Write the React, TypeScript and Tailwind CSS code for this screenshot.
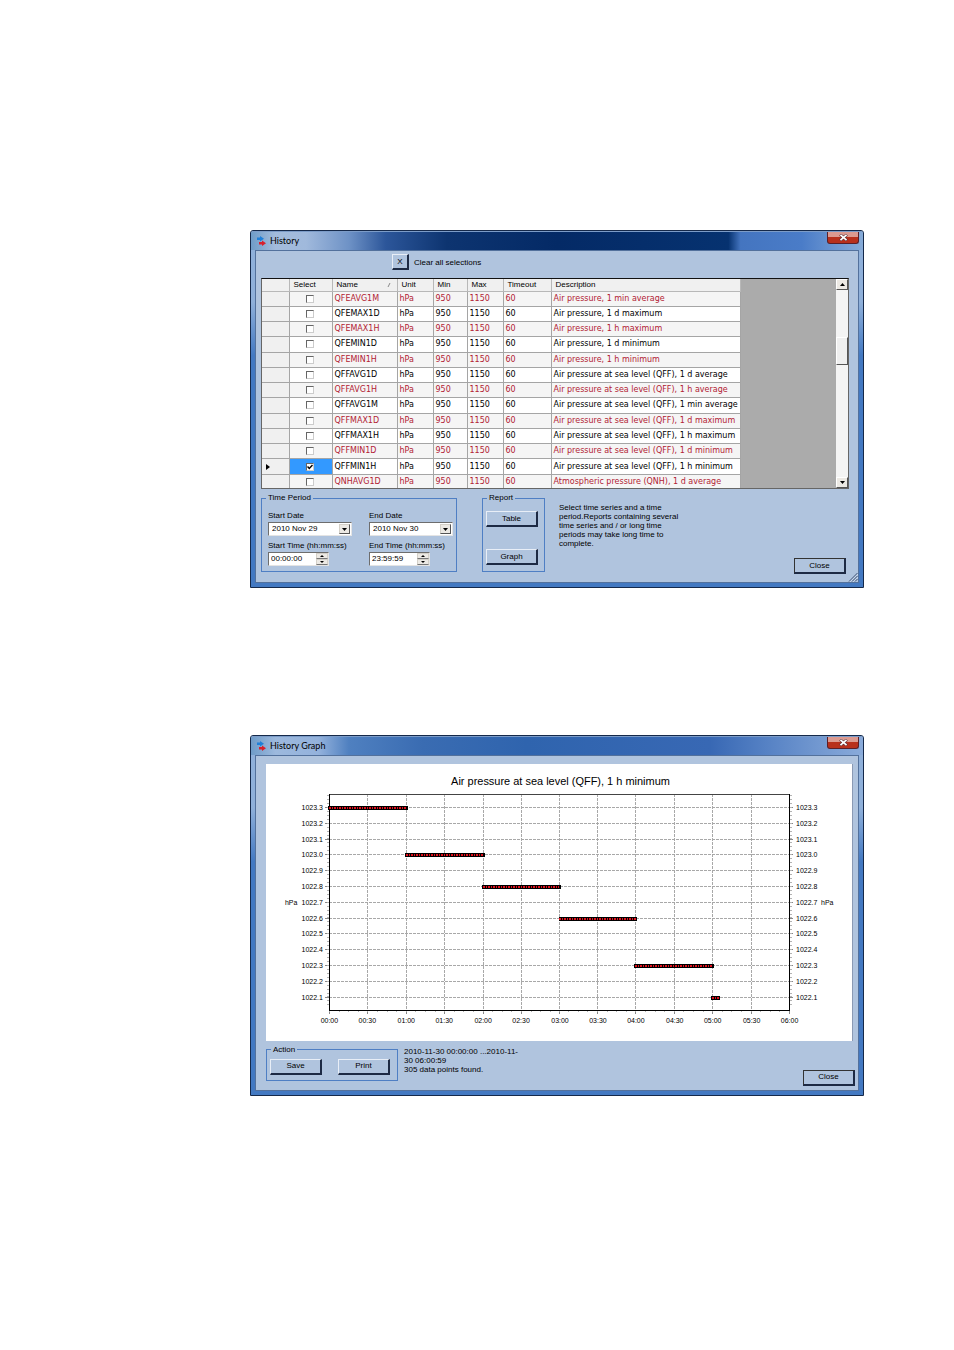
import { useState } from 'react';
import type { ReactNode } from 'react';

const rows = [
    { name: 'QFEAVG1M', desc: 'Air pressure, 1 min average', red: true },
    { name: 'QFEMAX1D', desc: 'Air pressure, 1 d maximum', red: false },
    { name: 'QFEMAX1H', desc: 'Air pressure, 1 h maximum', red: true },
    { name: 'QFEMIN1D', desc: 'Air pressure, 1 d minimum', red: false },
    { name: 'QFEMIN1H', desc: 'Air pressure, 1 h minimum', red: true },
    { name: 'QFFAVG1D', desc: 'Air pressure at sea level (QFF), 1 d average', red: false },
    { name: 'QFFAVG1H', desc: 'Air pressure at sea level (QFF), 1 h average', red: true },
    { name: 'QFFAVG1M', desc: 'Air pressure at sea level (QFF), 1 min average', red: false },
    { name: 'QFFMAX1D', desc: 'Air pressure at sea level (QFF), 1 d maximum', red: true },
    { name: 'QFFMAX1H', desc: 'Air pressure at sea level (QFF), 1 h maximum', red: false },
    { name: 'QFFMIN1D', desc: 'Air pressure at sea level (QFF), 1 d minimum', red: true },
    { name: 'QFFMIN1H', desc: 'Air pressure at sea level (QFF), 1 h minimum', red: false },
    { name: 'QNHAVG1D', desc: 'Atmospheric pressure (QNH), 1 d average', red: true },
];

const yLabels = ['1023.3', '1023.2', '1023.1', '1023.0', '1022.9', '1022.8', '1022.7', '1022.6', '1022.5', '1022.4', '1022.3', '1022.2', '1022.1'];
const xLabels = ['00:00', '00:30', '01:00', '01:30', '02:00', '02:30', '03:00', '03:30', '04:00', '04:30', '05:00', '05:30', '06:00'];

// start and end in half hours, row is the index in yLabels
const series = [
    { from: 0, to: 2, row: 0 },
    { from: 2, to: 4, row: 3 },
    { from: 4, to: 6, row: 5 },
    { from: 6, to: 8, row: 7 },
    { from: 8, to: 10, row: 10 },
    { from: 10, to: 10.15, row: 12 },
];

function AppIcon() {
    return (
        <svg className="h-[10px] w-[9px]" viewBox="0 0 9 10" aria-hidden="true">
            <path d="M0 1.5h3V0l4 2.700-4 2.700V4H0z" fill="#1f7fd8" />
            <path d="M2 6h3V4.500l4 2.700-4 2.700V8.500H2z" fill="#d8202c" />
        </svg>
    );
}

function Window({ title, titleBar, children }: { title: string; titleBar: string; children: ReactNode }) {
    return (
        <section className="flex flex-col rounded-t-[3px] border border-[#15294a] bg-linear-to-b from-[#8fb0da] from-20% to-[#4379c2] to-35% px-1 pb-1">
            <header className={`-mx-1 flex h-[19px] items-start justify-between rounded-t-[2px] border-t border-[#7c9cc8] pl-[6px] pr-1 ${titleBar}`}>
                <div className="flex h-[18px] items-center gap-1">
                    <AppIcon />
                    <h1 className="font-[Lato,sans-serif] text-[9px] leading-3">{title}</h1>
                </div>
                <button
                    aria-label="Close window"
                    className="flex h-3 w-8 items-center justify-center rounded-b-[3px] border border-t-0 border-[#5b1f28] bg-linear-to-b from-[#dc9a90] from-45% to-[#b8301c] to-50%"
                >
                    <svg className="h-[7px] w-[9px]" viewBox="0 0 8 6" aria-hidden="true">
                        <path d="M1 0.500 7 5.500M7 0.500 1 5.500" stroke="#5b3038" strokeWidth="2.600" />
                        <path d="M1.300 0.700 6.700 5.300M6.700 0.700 1.300 5.300" stroke="#fff" strokeWidth="1.600" />
                    </svg>
                </button>
            </header>
            <div className="relative border border-[#53719c] bg-[#b0c4de]">{children}</div>
        </section>
    );
}

function PushButton({ children, className = 'border-t-[#e8eef7] border-l-[#e8eef7]' }: { children: ReactNode; className?: string }) {
    return (
        <button className={`h-4 w-[52px] border border-r-2 border-b-2 border-r-[#1d2a44] border-b-[#1d2a44] text-center leading-3 ${className}`}>
            {children}
        </button>
    );
}

function Group({ title, className = '', children }: { title: string; className?: string; children: ReactNode }) {
    return (
        <fieldset className={`border border-[#4f7fc4] ${className}`}>
            <legend className="ml-1 px-[2px] leading-[10px]">{title}</legend>
            {children}
        </fieldset>
    );
}

function DateField({ id, label, value }: { id: string; label: string; value: string }) {
    return (
        <div className="flex w-[84px] flex-col">
            <label htmlFor={id} className="leading-3">{label}</label>
            <div className="relative flex">
                <select id={id} className="h-[14px] w-full appearance-none border border-t-[#6d6d6d] border-l-[#6d6d6d] border-[#e4e4e4] bg-white pl-[3px] leading-3">
                    <option>{value}</option>
                </select>
                <span className="pointer-events-none absolute top-[2px] right-[2px] flex h-[10px] w-[11px] items-center justify-center border border-[#d4d0c8] border-r-[#555] border-b-[#555] bg-[#ece9e4]">
                    <svg className="h-[3px] w-[5px]" viewBox="0 0 5 3" aria-hidden="true"><path d="M0 0h5L2.500 3z" /></svg>
                </span>
            </div>
        </div>
    );
}

function TimeField({ id, label, value }: { id: string; label: string; value: string }) {
    return (
        <div className="flex w-[84px] flex-col">
            <label htmlFor={id} className="leading-3 whitespace-nowrap">{label}</label>
            <div className="flex h-[14px] w-[61px] border border-t-[#6d6d6d] border-l-[#6d6d6d] border-[#e4e4e4] bg-white">
                <input id={id} defaultValue={value} className="w-full min-w-0 pl-[2px] leading-3" />
                <div className="flex w-3 shrink-0 flex-col">
                    <button aria-label={`Increase ${label}`} className="flex h-[6px] items-center justify-center border border-[#d4d0c8] border-b-[#777] bg-[#ece9e4]">
                        <svg className="h-[2px] w-[4px]" viewBox="0 0 4 2" aria-hidden="true"><path d="M0 2h4L2 0z" /></svg>
                    </button>
                    <button aria-label={`Decrease ${label}`} className="flex h-[6px] items-center justify-center border border-[#d4d0c8] border-b-[#777] bg-[#ece9e4]">
                        <svg className="h-[2px] w-[4px]" viewBox="0 0 4 2" aria-hidden="true"><path d="M0 0h4L2 2z" /></svg>
                    </button>
                </div>
            </div>
        </div>
    );
}

function SeriesTable() {
    const [selected, setSelected] = useState(['QFFMIN1H']);

    const toggle = (name: string) =>
        setSelected(selected.includes(name) ? selected.filter((n) => n !== name) : [...selected, name]);

    return (
        <div className="flex h-[211px] overflow-hidden border border-t-[#111] border-[#666] bg-[#ababab]">
            <table className="h-[211px] w-[479px] table-fixed border-collapse">
                <colgroup>
                    <col className="w-[27px]" />
                    <col className="w-[43px]" />
                    <col className="w-[65px]" />
                    <col className="w-[36px]" />
                    <col className="w-[34px]" />
                    <col className="w-[36px]" />
                    <col className="w-[48px]" />
                    <col />
                </colgroup>
                <thead>
                    <tr className="h-3 bg-[#f0f0f0] text-left leading-[10px] *:border-r *:border-b *:border-[#b8b8b8] *:p-0 *:pt-px *:pl-1 *:font-normal">
                        <th />
                        <th>Select</th>
                        <th>
                            <div className="flex items-center justify-between pr-[6px]">
                                Name
                                <svg className="h-[4px] w-[4px]" viewBox="0 0 4 4" aria-hidden="true"><path d="M1 4 3 0" stroke="#888" /></svg>
                            </div>
                        </th>
                        <th>Unit</th>
                        <th>Min</th>
                        <th>Max</th>
                        <th>Timeout</th>
                        <th>Description</th>
                    </tr>
                </thead>
                <tbody className="font-['DejaVu_Sans',Verdana,sans-serif] text-[8px] leading-[10px]">
                    {rows.map((row) => {
                        const checked = selected.includes(row.name);
                        return (
                            <tr
                                key={row.name}
                                className={`*:border-r *:border-b *:border-[#a5a5a5] *:p-0 *:pl-[2px] *:whitespace-nowrap ${row.red ? 'bg-[#f5f5f5] text-[#b22234]' : 'bg-white text-black'}`}
                            >
                                <td className="bg-[#f0f0f0]">
                                    {checked && <svg className="ml-[2px] h-[6px] w-[4px]" viewBox="0 0 4 6" aria-hidden="true"><path d="M0 0v6l4-3z" fill="#000" /></svg>}
                                </td>
                                <td className={checked ? 'bg-[#3399ff]' : ''}>
                                    <label className="relative ml-[14px] flex h-2 w-2">
                                        <input
                                            type="checkbox"
                                            aria-label={`Select ${row.name}`}
                                            checked={checked}
                                            onChange={() => toggle(row.name)}
                                            className="h-2 w-2 appearance-none border border-t-[#666] border-l-[#666] border-[#ccc] bg-white"
                                        />
                                        {checked && <svg className="absolute inset-[1px] h-[6px] w-[6px]" viewBox="0 0 6 6" aria-hidden="true"><path d="M0.500 2.500 2.300 4.500 5.500 1" fill="none" stroke="#000" strokeWidth="1.500" /></svg>}
                                    </label>
                                </td>
                                <td>{row.name}</td>
                                <td>hPa</td>
                                <td>950</td>
                                <td>1150</td>
                                <td>60</td>
                                <td>{row.desc}</td>
                            </tr>
                        );
                    })}
                </tbody>
            </table>
            <div className="ml-auto flex h-[209px] w-3 flex-col bg-[#f4f4f4]">
                <button aria-label="Scroll up" className="flex h-[11px] items-center justify-center border border-white border-r-[#555] border-b-[#555] bg-[#ece9e4]">
                    <svg className="h-[3px] w-[5px]" viewBox="0 0 5 3" aria-hidden="true"><path d="M0 3h5L2.500 0z" /></svg>
                </button>
                <div className="mt-[47px] h-[28px] border border-white border-r-[#555] border-b-[#555] bg-[#efefef]" />
                <button aria-label="Scroll down" className="mt-auto flex h-[11px] items-center justify-center border border-white border-r-[#555] border-b-[#555] bg-[#ece9e4]">
                    <svg className="h-[3px] w-[5px]" viewBox="0 0 5 3" aria-hidden="true"><path d="M0 0h5L2.500 3z" /></svg>
                </button>
            </div>
        </div>
    );
}

function HistoryWindow() {
    return (
        <Window
            title="History"
            titleBar="bg-[linear-gradient(90deg,#6f9cc8,#a3bcdc_4%,#a0b9dc_9%,#6e92c6_16%,#2c569a_22%,#0d3470_32%,#042a66_50%,#063270_78%,#4475c0_80%,#4a7cc8_90%,#86abd8)]"
        >
            <div className="flex flex-col pt-[3px] pr-[9px] pl-[5px]">
                <div className="mb-2 ml-[131px] flex items-center gap-[5px]">
                    <button id="clear" className="h-4 w-[17px] border border-t-[#e8eef7] border-l-[#e8eef7] border-r-2 border-b-2 border-r-[#1d2a44] border-b-[#1d2a44] leading-3">X</button>
                    <label htmlFor="clear">Clear all selections</label>
                </div>
                <SeriesTable />
                <div className="mt-1 flex h-[89px] items-start">
                    <Group title="Time Period" className="h-[79px] w-[196px] shrink-0">
                        <div className="mt-[7px] grid grid-cols-[101px_84px] gap-y-1 pl-[6px]">
                            <DateField id="start-date" label="Start Date" value="2010 Nov 29" />
                            <DateField id="end-date" label="End Date" value="2010 Nov 30" />
                            <TimeField id="start-time" label="Start Time (hh:mm:ss)" value="00:00:00" />
                            <TimeField id="end-time" label="End Time (hh:mm:ss)" value="23:59:59" />
                        </div>
                    </Group>
                    <Group title="Report" className="ml-[25px] h-[79px] w-[63px] shrink-0">
                        <div className="mt-2 flex flex-col gap-[22px] px-[3px]">
                            <PushButton>Table</PushButton>
                            <PushButton>Graph</PushButton>
                        </div>
                    </Group>
                    <p className="mt-[10px] ml-[14px] w-[124px]">
                        Select time series and a time period.Reports containing several time series and / or long time periods may take long time to complete.
                    </p>
                    <PushButton className="mt-[65px] mr-[3px] ml-auto border-t-[#333] border-l-[#333]">Close</PushButton>
                </div>
            </div>
            {/* resize grip */}
            <svg className="absolute right-0 bottom-0 h-[10px] w-[10px]" viewBox="0 0 10 10" aria-hidden="true">
                <path d="M1 9.500 9.500 1M4 9.500 9.500 4M7 9.500 9.500 7" stroke="#3c5175" />
                <path d="M2 10 10 2M5 10 10 5" stroke="#e4ecf7" strokeWidth="0.500" />
            </svg>
        </Window>
    );
}

function PressureChart() {
    const left = 63;
    const right = 524;
    const top = 30;
    const bottom = 246;
    const x = (i: number) => Math.round(left + (i * (right - left)) / 12) + 0.5;
    const y = (i: number) => Math.round(43 + i * 15.8) + 0.5;

    return (
        <svg className="w-full bg-white font-['Liberation_Sans',Arial,sans-serif]" viewBox="0 0 587 277" shapeRendering="crispEdges" role="img" aria-label="Air pressure chart">
            <text x="295" y="21" textAnchor="middle" fontSize="11">Air pressure at sea level (QFF), 1 h minimum</text>
            {yLabels.map((label, i) => (
                <g key={label}>
                    <path d={`M${left} ${y(i)}H${right}`} stroke="#a8a8a8" strokeDasharray="3 1" />
                    <path d={`M${left - 4} ${y(i)}H${left}M${right} ${y(i)}h4`} stroke="#888" />
                    <text x="57" y={y(i) + 2.5} textAnchor="end" fontSize="7">{label}</text>
                    <text x="531" y={y(i) + 2.5} fontSize="7">{label}</text>
                </g>
            ))}
            {xLabels.map((label, i) => (
                <g key={label}>
                    <path d={`M${x(i)} ${top}V${bottom}`} stroke="#a8a8a8" strokeDasharray="3 1" />
                    <path d={`M${x(i)} ${bottom}v4`} stroke="#888" />
                    <text x={x(i)} y="259" textAnchor="middle" fontSize="7">{label}</text>
                </g>
            ))}
            <text x="19" y={y(6) + 2.5} fontSize="7">hPa</text>
            <text x="556" y={y(6) + 2.5} fontSize="7">hPa</text>
            {/* minor ticks */}
            {Array.from({ length: 54 }, (_, i) => (
                <path key={i} d={`M${left - 2} ${Math.round(31 + i * 3.95) + 0.5}h2M${right + 1} ${Math.round(31 + i * 3.95) + 0.5}h2`} stroke="#b4b4b4" />
            ))}
            {Array.from({ length: 48 }, (_, i) => (
                <path key={i} d={`M${x(i / 4)} ${bottom}v2`} stroke="#b4b4b4" />
            ))}
            <path d={`M${left} ${top + 0.5}H${right}`} stroke="#444" />
            <path d={`M${left + 0.5} ${top}V${bottom + 0.5}H${right + 0.5}V${top}`} fill="none" stroke="#000" />
            {series.map((s) => (
                <g key={s.row}>
                    <path d={`M${x(s.from) - 1.5} ${y(s.row) + 0.5}H${x(s.to) + 1.5}`} stroke="#000" strokeWidth="4" />
                    <path d={`M${x(s.from) - 0.5} ${y(s.row) + 0.5}H${x(s.to) + 0.5}`} stroke="#e0101c" strokeWidth="2" strokeDasharray="2 1 1 1" />
                </g>
            ))}
        </svg>
    );
}

function GraphWindow() {
    return (
        <Window
            title="History Graph"
            titleBar="bg-[linear-gradient(90deg,#6f9cc8,#9db9dd_4%,#94b2dc_11%,#4f80c0_16%,#3a6cb2_28%,#2f64ae_45%,#3868b4_75%,#5581c4_84%,#8aabda)]"
        >
            <div className="flex flex-col pt-2 pr-[3px] pl-[10px]">
                <div className="mr-[2px] flex border-r border-[#8a9ab4]"><PressureChart /></div>
                <div className="mt-1 flex h-[45px] items-start">
                    <Group title="Action" className="h-[36px] w-[132px] shrink-0">
                        <div className="mt-1 flex gap-4 pl-[3px]">
                            <PushButton>Save</PushButton>
                            <PushButton>Print</PushButton>
                        </div>
                    </Group>
                    <p className="mt-[2px] ml-[6px] w-[120px]">
                        2010-11-30 00:00:00 ...2010-11-30 06:00:59<br />305 data points found.
                    </p>
                    <PushButton className="mt-[25px] ml-auto border-t-[#333] border-l-[#333]">Close</PushButton>
                </div>
            </div>
        </Window>
    );
}

export default function App() {
    return (
        <main className="flex min-h-screen flex-col gap-[147px] bg-white pt-[230px] pr-[90px] pb-8 pl-[250px] font-['Liberation_Sans',Arial,sans-serif] text-[8px] leading-[9px] text-black">
            <HistoryWindow />
            <GraphWindow />
        </main>
    );
}
